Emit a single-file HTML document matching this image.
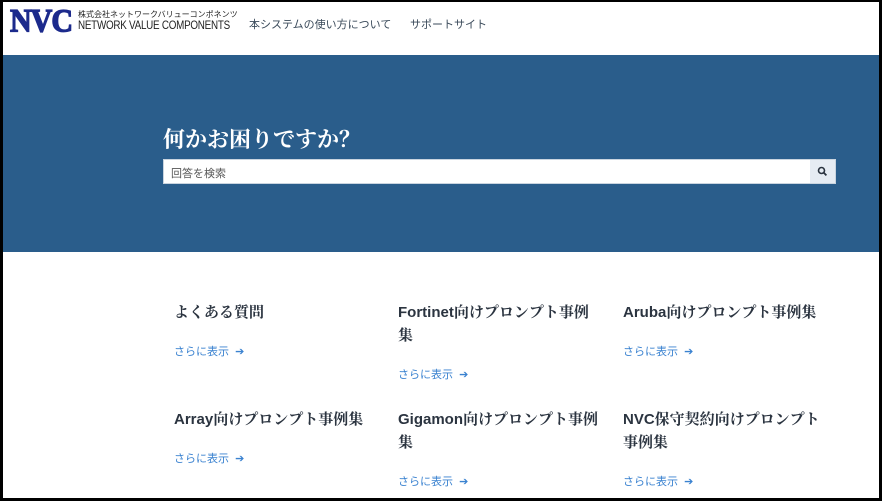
<!DOCTYPE html>
<html><head><meta charset="utf-8"><style>
*{margin:0;padding:0;box-sizing:border-box}
body{width:882px;height:501px;overflow:hidden;background:#fff;font-family:"Liberation Sans","Noto Sans CJK JP",sans-serif;position:relative}
.frame{position:absolute;inset:0;border:3px solid #000;border-top-width:2px;pointer-events:none;z-index:10}
.hdr{position:absolute;left:0;top:0;width:882px;height:55px}
.logo{position:absolute;left:10px;top:3px;font-family:"Liberation Serif",serif;font-weight:bold;font-size:30px;color:#1c2a8c;letter-spacing:-1px;-webkit-text-stroke:1.2px #1c2a8c;transform:scale(1.0,1.1);transform-origin:left top}
.sm1{position:absolute;left:78px;top:9px;font-size:8px;color:#222;font-family:"Noto Sans CJK JP",sans-serif}
.sm2{position:absolute;left:78px;top:18px;font-size:12px;color:#222;transform:scaleX(.82);transform-origin:left;letter-spacing:-.3px}
.nav{position:absolute;top:16px;font-size:11px;color:#3a4a5a}
.hero{position:absolute;left:0;top:55px;width:882px;height:197px;background:#2a5d8b}
.hero h1{position:absolute;left:163px;top:68px;font-family:"Liberation Serif","Noto Serif CJK SC",serif;font-size:22px;color:#fff;font-weight:bold}
.hero h1 span{font-family:"Noto Serif CJK SC",serif}
.search{position:absolute;left:163px;top:104px;width:673px;height:25px;background:#fff;border:1px solid #c9d4df}
.search span{position:absolute;left:7px;top:5px;font-size:11px;color:#555}
.btn{position:absolute;right:0;top:0;width:25px;height:23px;background:#e6ecf3}
.card{position:absolute;width:205px}
.card h2{font-size:15px;font-weight:bold;color:#2b3440;line-height:23px;font-family:"Liberation Sans","Noto Serif CJK SC",serif}
.card a{display:block;font-size:11px;color:#3a82d0;text-decoration:none;margin-top:19px}
</style></head><body>
<div class="hdr">
<div class="logo">NVC</div>
<div class="sm1">株式会社ネットワークバリューコンポネンツ</div>
<div class="sm2">NETWORK VALUE COMPONENTS</div>
<div class="nav" style="left:249px">本システムの使い方について</div>
<div class="nav" style="left:410px">サポートサイト</div>
</div>
<div class="hero">
<h1>何かお困りですか<span>？</span></h1>
<div class="search"><span>回答を検索</span><div class="btn"><svg width="25" height="23" viewBox="0 0 25 23"><circle cx="11.5" cy="10.5" r="3" fill="none" stroke="#2b3440" stroke-width="1.6"/><path d="M13.8 12.8l2.6 2.6" stroke="#2b3440" stroke-width="1.8"/></svg></div></div>
</div>
<div class="card" style="left:174px;top:301px"><h2>よくある質問</h2><a>さらに表示&nbsp; ➔</a></div>
<div class="card" style="left:398px;top:301px"><h2>Fortinet向けプロンプト事例集</h2><a>さらに表示&nbsp; ➔</a></div>
<div class="card" style="left:623px;top:301px"><h2>Aruba向けプロンプト事例集</h2><a>さらに表示&nbsp; ➔</a></div>
<div class="card" style="left:174px;top:408px"><h2>Array向けプロンプト事例集</h2><a>さらに表示&nbsp; ➔</a></div>
<div class="card" style="left:398px;top:408px;width:212px"><h2>Gigamon向けプロンプト事例集</h2><a>さらに表示&nbsp; ➔</a></div>
<div class="card" style="left:623px;top:408px"><h2>NVC保守契約向けプロンプト事例集</h2><a>さらに表示&nbsp; ➔</a></div>
<div class="frame"></div>
</body></html>
